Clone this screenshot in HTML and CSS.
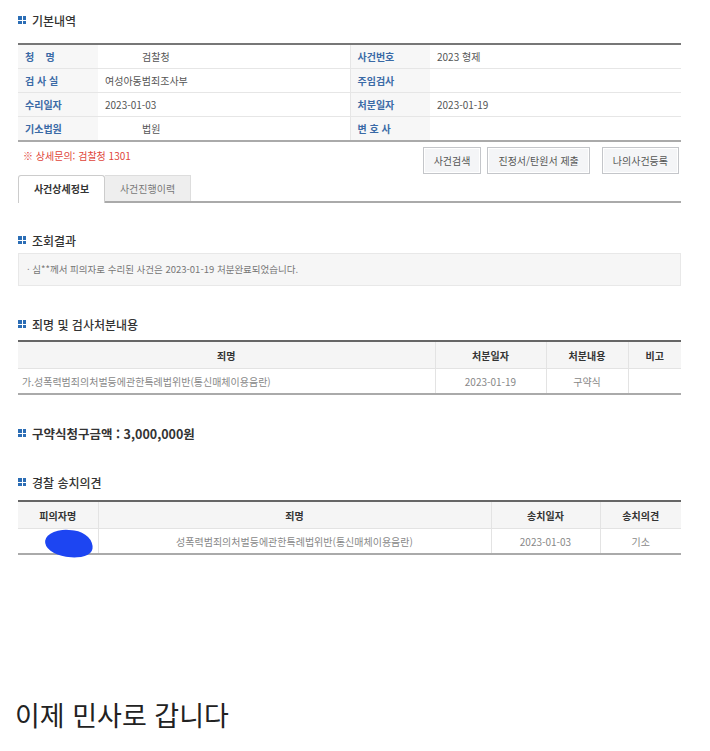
FILE: index.html
```html
<!DOCTYPE html>
<html lang="ko">
<head>
    <meta charset="UTF-8">
    <title>사건조회</title>
    <link rel="stylesheet" href="styles.css">
</head>
<body>
    <div class="page">
        <h3 class="sec-title first"><span class="ico"></span>기본내역</h3>
        <table class="info-table">
            <colgroup><col class="c-lbl"><col class="c-val"><col class="c-lbl"><col></colgroup>
            <tr>
                <th>청&nbsp;&nbsp;&nbsp;&nbsp;명</th><td><span class="indent">검찰청</span></td>
                <th>사건번호</th><td>2023 형제</td>
            </tr>
            <tr>
                <th>검 사 실</th><td>여성아동범죄조사부</td>
                <th>주임검사</th><td></td>
            </tr>
            <tr>
                <th>수리일자</th><td>2023-01-03</td>
                <th>처분일자</th><td>2023-01-19</td>
            </tr>
            <tr>
                <th>기소법원</th><td><span class="indent">법원</span></td>
                <th>변 호 사</th><td></td>
            </tr>
        </table>

        <div class="action-row">
            <p class="notice">※ 상세문의: 검찰청 1301</p>
            <div class="btns">
                <button class="btn">사건검색</button>
                <button class="btn">진정서/탄원서 제출</button>
                <button class="btn">나의사건등록</button>
            </div>
        </div>

        <ul class="tabs">
            <li class="active">사건상세정보</li>
            <li>사건진행이력</li>
        </ul>

        <h3 class="sec-title"><span class="ico"></span>조회결과</h3>
        <div class="result-box">· 심**께서 피의자로 수리된 사건은 2023-01-19 처분완료되었습니다.</div>

        <h3 class="sec-title"><span class="ico"></span>죄명 및 검사처분내용</h3>
        <table class="list-table charge-table">
            <colgroup><col><col class="c1"><col class="c2"><col class="c3"></colgroup>
            <tr><th>죄명</th><th>처분일자</th><th>처분내용</th><th>비고</th></tr>
            <tr>
                <td class="left">가.성폭력범죄의처벌등에관한특례법위반(통신매체이용음란)</td>
                <td>2023-01-19</td><td>구약식</td><td></td>
            </tr>
        </table>

        <h3 class="sec-title big"><span class="ico"></span>구약식청구금액 : 3,000,000원</h3>

        <h3 class="sec-title"><span class="ico"></span>경찰 송치의견</h3>
        <table class="list-table police-table">
            <colgroup><col class="p0"><col><col class="p2"><col class="p3"></colgroup>
            <tr><th>피의자명</th><th>죄명</th><th>송치일자</th><th>송치의견</th></tr>
            <tr>
                <td class="name-cell"><span class="blot"></span></td>
                <td>성폭력범죄의처벌등에관한특례법위반(통신매체이용음란)</td>
                <td>2023-01-03</td><td>기소</td>
            </tr>
        </table>
    </div>

    <p class="caption">이제 민사로 갑니다</p>
</body>
</html>
```

FILE: styles.css
```css
body {
    margin: 0;
    font-family: "Noto Sans CJK KR", "Noto Sans", sans-serif;
    background: #fff;
    color: #555;
}
.page {
    width: 663px;
    padding: 0 0 0 18px;
}
.sec-title {
    display: flex;
    align-items: center;
    margin: 0;
    height: 18px;
    font-size: 12px;
    font-weight: 500;
    color: #333;
}
.sec-title.first { margin-top: 11px; margin-bottom: 14px; }
.sec-title.big { font-size: 12.5px; font-weight: 700; margin-top: 29px; }
.ico {
    width: 8px;
    height: 8px;
    margin-right: 6px;
    background:
        linear-gradient(#fff, #fff) 0 3.5px / 8px 1px no-repeat,
        linear-gradient(#fff, #fff) 3.5px 0 / 1px 8px no-repeat,
        #2b6db5;
}

/* basic info */
.info-table {
    width: 100%;
    border-collapse: collapse;
    border-top: 2px solid #777;
    border-bottom: 2px solid #aaa;
    font-size: 10px;
}
.info-table .c-lbl { width: 80px; }
.info-table .c-val { width: 252px; }
.info-table th,
.info-table td {
    height: 23px;
    padding: 0 7px;
    text-align: left;
    border-bottom: 1px solid #e6e6e6;
}
.info-table th {
    background: #f7f7f7;
    color: #3a6aa6;
    font-weight: 700;
    white-space: pre;
}
.info-table td { color: #555; }
.info-table td:nth-child(2) { border-right: 1px solid #e6e6e6; }
.info-table .indent { padding-left: 37px; }

.action-row {
    display: flex;
    justify-content: space-between;
    align-items: flex-start;
    height: 28px;
    margin-top: 5px;
}
.notice {
    margin: 2px 0 0 5px;
    font-size: 10px;
    line-height: 14px;
    color: #e0453a;
}
.btns {
    display: flex;
    gap: 6px;
    margin-right: 2px;
}
.btns .btn:nth-child(3) { margin-left: 6px; }
.btn {
    height: 27px;
    padding: 0 10px;
    font-family: inherit;
    font-size: 10px;
    color: #555;
    background: #f4f5f7;
    border: 1px solid #c4c6ca;
    box-shadow: inset 0 0 0 1px #fff;
}

.tabs {
    display: flex;
    list-style: none;
    margin: 0;
    padding: 0;
    border-bottom: 2px solid #aaa;
}
.tabs li {
    width: 85px;
    height: 25px;
    line-height: 25px;
    text-align: center;
    font-size: 10px;
    color: #777;
    background: #eee;
    border-top: 1px solid #ddd;
    border-right: 1px solid #ddd;
}
.tabs li.active {
    background: #fff;
    color: #333;
    font-weight: 700;
    border: 1px solid #ccc;
    border-bottom: none;
    border-radius: 3px 3px 0 0;
    margin-bottom: -2px;
    height: 27px;
}

.tabs + .sec-title { margin-top: 28px; }
.result-box {
    margin-top: 4px;
    height: 31px;
    line-height: 31px;
    padding-left: 8px;
    font-size: 9.5px;
    color: #777;
    background: #f6f6f6;
    border: 1px solid #e8e8e8;
}
.result-box + .sec-title { margin-top: 29px; }

/* list tables */
.list-table {
    width: 100%;
    border-collapse: collapse;
    border-top: 2px solid #666;
    border-bottom: 2px solid #aaa;
    font-size: 10px;
    margin-top: 7px;
}
.list-table th,
.list-table td { padding: 0; }
.list-table th {
    height: 26px;
    background: #f5f5f5;
    color: #333;
    font-weight: 700;
    border-bottom: 1px solid #e3e3e3;
}
.list-table td {
    height: 24px;
    text-align: center;
    color: #888;
}
.list-table th + th,
.list-table td + td { border-left: 1px solid #e3e3e3; }
.list-table td.left { text-align: left; padding-left: 4px; }
.charge-table .c1 { width: 111px; }
.charge-table .c2 { width: 82px; }
.charge-table .c3 { width: 53px; }
.police-table .p0 { width: 80px; }
.police-table .p2 { width: 109px; }
.police-table .p3 { width: 81px; }
.police-table { margin-top: 9px; }
.big + .sec-title { margin-top: 31px; }

.name-cell { position: relative; }
.blot {
    position: absolute;
    left: 27px;
    top: 1px;
    width: 48px;
    height: 27px;
    background: #1d45f2;
    border-radius: 55% 45% 50% 50% / 55% 60% 45% 50%;
    transform: rotate(8deg);
}

.caption {
    margin: 140px 0 0 15px;
    font-size: 27px;
    color: #222;
}
```
